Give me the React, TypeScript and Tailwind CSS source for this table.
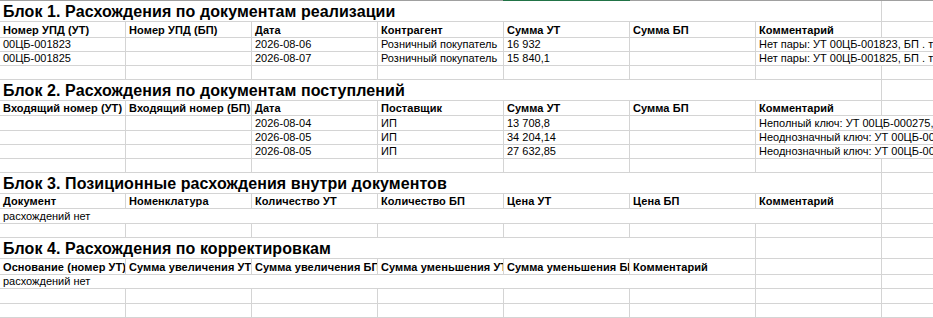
type Cell = {
  text?: string;
  span?: number;
  bold?: boolean;
  grow?: boolean;
};

type Row = {
  h: number;
  title?: boolean;
  cells: Cell[];
};

const hdr = (labels: string[]): Cell[] => labels.map((t) => ({ text: t, bold: true }));

const data = (vals: string[], comment?: string): Cell[] => {
  const cells: Cell[] = vals.map((t) => ({ text: t }));
  if (comment) cells.push({ text: comment, grow: true });
  return cells;
};

const empty: Cell[] = [{}, {}, {}, {}, {}, {}, {}];

const rows: Row[] = [
  // Блок 1
  { h: 21, title: true, cells: [{ text: 'Блок 1. Расхождения по документам реализации', span: 7 }] },
  { h: 16, cells: hdr(['Номер УПД (УТ)', 'Номер УПД (БП)', 'Дата', 'Контрагент', 'Сумма УТ', 'Сумма БП', 'Комментарий']) },
  { h: 14, cells: data(['00ЦБ-001823', '', '2026-08-06', 'Розничный покупатель', '16 932', ''], 'Нет пары: УТ 00ЦБ-001823, БП . товаров не найдено') },
  { h: 14, cells: data(['00ЦБ-001825', '', '2026-08-07', 'Розничный покупатель', '15 840,1', ''], 'Нет пары: УТ 00ЦБ-001825, БП . товаров не найдено') },
  { h: 14, cells: empty },

  // Блок 2
  { h: 21, title: true, cells: [{ text: 'Блок 2. Расхождения по документам поступлений', span: 7 }] },
  { h: 15, cells: hdr(['Входящий номер (УТ)', 'Входящий номер (БП)', 'Дата', 'Поставщик', 'Сумма УТ', 'Сумма БП', 'Комментарий']) },
  { h: 15, cells: data(['', '', '2026-08-04', 'ИП', '13 708,8', ''], 'Неполный ключ: УТ 00ЦБ-000275, БП не найден') },
  { h: 14, cells: data(['', '', '2026-08-05', 'ИП', '34 204,14', ''], 'Неоднозначный ключ: УТ 00ЦБ-000281, БП') },
  { h: 14, cells: data(['', '', '2026-08-05', 'ИП', '27 632,85', ''], 'Неоднозначный ключ: УТ 00ЦБ-000282, БП') },
  { h: 14, cells: empty },

  // Блок 3
  { h: 21, title: true, cells: [{ text: 'Блок 3. Позиционные расхождения внутри документов', span: 7 }] },
  { h: 15, cells: hdr(['Документ', 'Номенклатура', 'Количество УТ', 'Количество БП', 'Цена УТ', 'Цена БП', 'Комментарий']) },
  { h: 15, cells: [{ text: 'расхождений нет', span: 7 }] },
  { h: 14, cells: empty },

  // Блок 4
  { h: 21, title: true, cells: [{ text: 'Блок 4. Расхождения по корректировкам', span: 6 }, {}] },
  { h: 16, cells: [...hdr(['Основание (номер УТ)', 'Сумма увеличения УТ', 'Сумма увеличения БП', 'Сумма уменьшения УТ', 'Сумма уменьшения БП', 'Комментарий']), {}] },
  { h: 14, cells: [{ text: 'расхождений нет', span: 6 }, {}] },
  { h: 15, cells: empty },
  { h: 14, cells: empty },
];

const COL = 126;

function SheetRow({ row }: { row: Row }) {
  const hasGrow = row.cells.some((c) => c.grow);
  return (
    <div className="flex border-b border-[#d4d4d4]" style={{ height: row.h }}>
      {row.cells.map((c, i) => (
        <div
          key={i}
          className={`flex items-end overflow-hidden whitespace-nowrap pl-[3px] ${
            c.grow ? 'min-w-0 flex-1' : 'shrink-0 border-r border-[#d4d4d4]'
          } ${row.title ? 'text-[16px] leading-[18px] font-bold tracking-[0.08px]' : 'text-[11px] leading-[13px]'} ${
            c.bold ? 'font-bold tracking-[0.08px]' : ''
          }`}
          style={c.grow ? undefined : { width: (c.span ?? 1) * COL }}
        >
          {c.text}
        </div>
      ))}
      {!hasGrow && <div className="min-w-0 flex-1" />}
    </div>
  );
}

export default function App() {
  return (
    <div className="h-[318px] w-[933px] overflow-hidden bg-white font-['Liberation_Sans',Arial,sans-serif] text-black">
      <div className="flex h-px">
        <div className="w-[503px] bg-[#a0a0a0]" />
        <div className="w-[127px] bg-[#217346]" />
        <div className="flex-1 bg-[#a0a0a0]" />
      </div>
      {rows.map((r, i) => (
        <SheetRow key={i} row={r} />
      ))}
    </div>
  );
}
